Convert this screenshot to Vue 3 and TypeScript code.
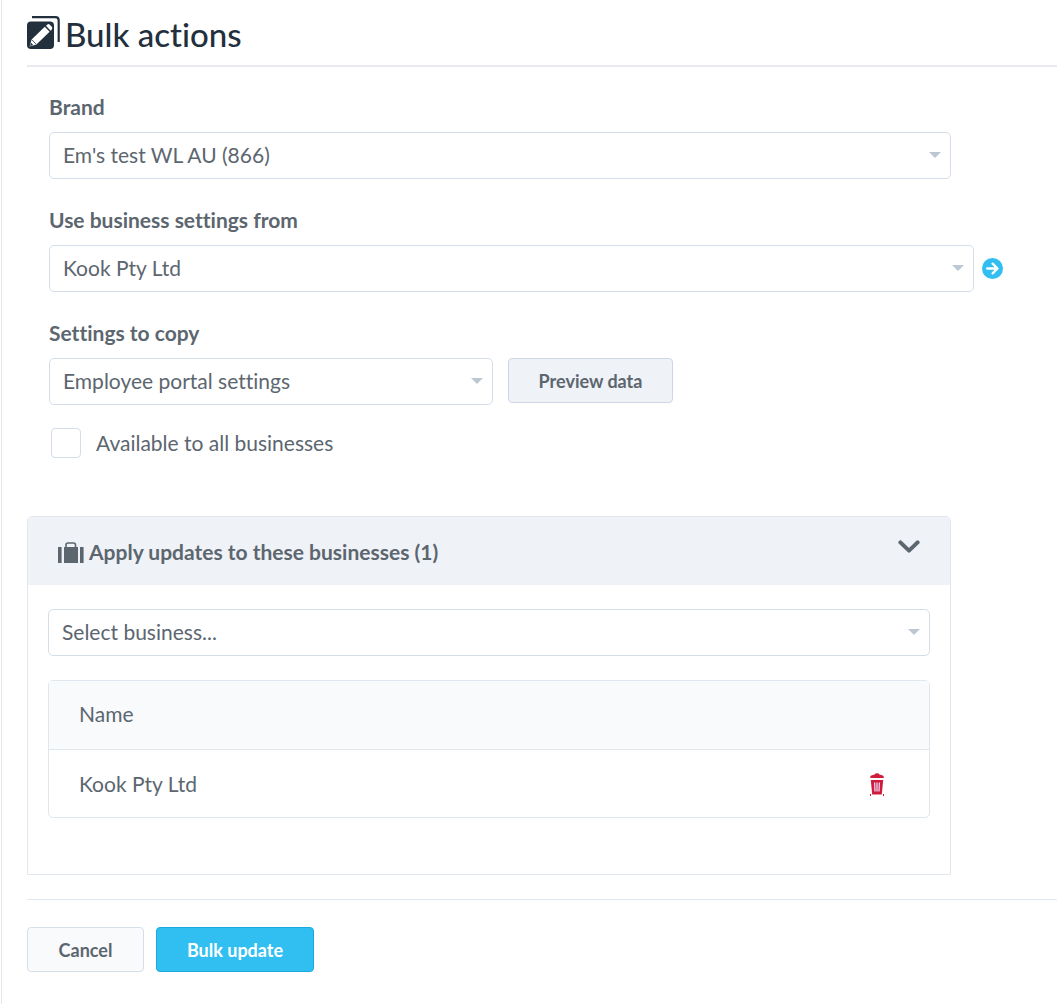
<script setup lang="ts">
import { computed, ref } from 'vue'

interface Business {
  id: number
  name: string
}

const brands = ["Em's test WL AU (866)"]
const businesses: Business[] = [{ id: 1, name: 'Kook Pty Ltd' }]
const settings = ['Employee portal settings']

const brand = ref(brands[0])
const source = ref(businesses[0].id)
const setting = ref(settings[0])
const availableToAll = ref(false)
const expanded = ref(true)
const picked = ref('')
const targets = ref<Business[]>([...businesses])
const count = computed(() => targets.value.length)

function addTarget() {
  const found = businesses.find((b) => String(b.id) === String(picked.value))
  if (found && !targets.value.some((b) => b.id === found.id)) targets.value.push(found)
  picked.value = ''
}

function removeTarget(id: number) {
  targets.value = targets.value.filter((b) => b.id !== id)
}
</script>

<template>
  <main class="page">
    <header class="title">
      <svg class="title-icon" width="34" height="34" viewBox="0 0 34 34" aria-hidden="true">
        <path d="M5 1.2H28.5Q31.7 1.2 31.7 4.4V26" fill="none" stroke="#22303d" stroke-width="2.2" />
        <rect x="0" y="5.5" width="27" height="27.5" rx="4" fill="#22303d" />
        <path d="M2.6 30.5L4.6 23.5L17.8 10.8L22.6 15.8L9.4 28.5ZM19 9.7L20.4 8.4Q21.6 7.6 22.8 8.7L24.8 10.8Q25.8 12.1 24.8 13.4L23.6 14.7Z" fill="#fff" />
        <path d="M3 30L6.2 29.1L4 26.7Z" fill="#22303d" />
        <path d="M4.8 23.7L9.2 28.3" stroke="#22303d" stroke-width="0.8" />
      </svg>
      <h1>Bulk actions</h1>
    </header>

    <form @submit.prevent>
      <div class="fields">
        <div class="field narrow">
          <label for="brand">Brand</label>
          <div class="select">
            <select id="brand" v-model="brand">
              <option v-for="b in brands" :key="b" :value="b">{{ b }}</option>
            </select>
          </div>
        </div>

        <div class="field">
          <label for="source">Use business settings from</label>
          <div class="row">
            <div class="select">
              <select id="source" v-model="source">
                <option v-for="b in businesses" :key="b.id" :value="b.id">{{ b.name }}</option>
              </select>
            </div>
            <a class="go" href="#" aria-label="Go to business">
              <svg width="21" height="21" viewBox="0 0 21 21" aria-hidden="true">
                <circle cx="10.5" cy="10.5" r="10.5" fill="#30bff0" />
                <path d="M5.2 10.5H15M10.6 5.6L15.5 10.5L10.6 15.4" fill="none" stroke="#fff" stroke-width="2.3" stroke-linecap="round" stroke-linejoin="round" />
              </svg>
            </a>
          </div>
        </div>

        <div class="field">
          <label for="setting">Settings to copy</label>
          <div class="row top">
            <div class="select setting">
              <select id="setting" v-model="setting">
                <option v-for="s in settings" :key="s" :value="s">{{ s }}</option>
              </select>
            </div>
            <button type="button" class="btn preview">Preview data</button>
          </div>
        </div>

        <label class="check">
          <input v-model="availableToAll" type="checkbox" />
          <span>Available to all businesses</span>
        </label>
      </div>

      <section class="panel">
        <div class="panel-head">
          <svg class="luggage" width="26" height="22" viewBox="0 0 26 22" aria-hidden="true">
            <path d="M0 5H3.6V21H0ZM22 5H25.6V21H22ZM6 5H20V21H6Z" fill="#5c666f" />
            <path d="M8 5V3Q8 1 10 1H15.5Q17.5 1 17.5 3V5" fill="none" stroke="#5c666f" stroke-width="1.6" />
          </svg>
          <h2>Apply updates to these businesses ({{ count }})</h2>
          <button type="button" class="toggle" aria-label="Toggle businesses" :aria-expanded="expanded" @click="expanded = !expanded">
            <svg width="22" height="14" viewBox="0 0 22 14" aria-hidden="true">
              <path d="M2.4 2.4L11 10.6L19.6 2.4" fill="none" stroke="#5c666f" stroke-width="4" stroke-linecap="round" stroke-linejoin="round" />
            </svg>
          </button>
        </div>
        <div v-if="expanded" class="panel-body">
          <div class="select">
            <select v-model="picked" aria-label="Select business" @change="addTarget">
              <option value="">Select business...</option>
              <option v-for="b in businesses" :key="b.id" :value="b.id">{{ b.name }}</option>
            </select>
          </div>
          <table>
            <thead>
              <tr>
                <th scope="col">Name</th>
                <th class="action"></th>
              </tr>
            </thead>
            <tbody>
              <tr v-for="b in targets" :key="b.id">
                <td>{{ b.name }}</td>
                <td class="action">
                  <button type="button" class="remove" :aria-label="`Remove ${b.name}`" @click="removeTarget(b.id)">
                    <svg width="14" height="23" viewBox="0 0 14 23" aria-hidden="true">
                      <path d="M0.3 5V3.6Q0.5 2.6 2 2.2L4.6 1.6Q5 0.3 7 0.3T9.4 1.6L12 2.2Q13.5 2.6 13.7 3.6V5Z" fill="#cf1c3c" />
                      <path d="M0.8 7H13.2L11.8 21.4H2.2Z" fill="#cf1c3c" />
                      <path d="M4.6 9.5L5 18.5M7 9.5V18.5M9.4 9.5L9 18.5" stroke="#f3d3f2" stroke-width="1.3" />
                      <path d="M0 21H1V23H0ZM13 21H14V23H13Z" fill="#cf1c3c" />
                    </svg>
                  </button>
                </td>
              </tr>
            </tbody>
          </table>
        </div>
      </section>

      <footer class="actions">
        <button type="button" class="btn cancel">Cancel</button>
        <button type="submit" class="btn primary">Bulk update</button>
      </footer>
    </form>
  </main>
</template>

<style>
body {
  background: #fff;
}
</style>

<style scoped>
.page {
  box-sizing: border-box;
  min-height: 100vh;
  margin-left: 1px;
  padding-left: 25px;
  border-left: 1px solid #e3e8ef;
  color: #5c666f;
  font-family: Lato, "Open Sans", sans-serif;
  font-size: 21px;
  font-variant-ligatures: none;
  line-height: 24px;
}

.page *,
.page *::after {
  box-sizing: border-box;
}

.title {
  display: flex;
  align-items: center;
  gap: 4px;
  height: 67px;
  border-bottom: 2px solid #e8eaed;
}

h1 {
  margin: 0;
  padding-top: 2px;
  color: #22303d;
  font-size: 33px;
  font-weight: 500;
  line-height: 40px;
}

.fields {
  padding: 28px 54px 0 22px;
}

.field {
  margin-bottom: 29px;
}

.field > label {
  display: block;
  margin-bottom: 13px;
  font-weight: 700;
}

.narrow {
  margin-right: 52px;
}

.row {
  display: flex;
  align-items: center;
  gap: 8px;
}

.row.top {
  align-items: flex-start;
  gap: 15px;
}

.select {
  position: relative;
  flex: 1;
}

.select.setting {
  flex: 0 1 444px;
}

.select::after {
  content: "";
  position: absolute;
  top: 20px;
  right: 10px;
  border: 6px solid transparent;
  border-top-color: #bcc7d3;
  border-bottom: 0;
  pointer-events: none;
}

select {
  display: block;
  width: 100%;
  height: 47px;
  padding: 0 32px 2px 13px;
  border: 1px solid #d5dde9;
  border-radius: 5px;
  appearance: none;
  background: #fff;
  color: inherit;
  font: inherit;
}

.go,
.go svg,
.panel svg,
.title-icon {
  display: block;
  flex: none;
}

.btn {
  height: 45px;
  padding: 0;
  border: 1px solid #d5dfe8;
  border-radius: 4px;
  background: #f8fafc;
  color: #5c666f;
  font-family: inherit;
  font-size: 18px;
  font-weight: 700;
  white-space: nowrap;
}

.btn.preview {
  width: 165px;
  border-color: #cdd6e8;
  background: #eff2f7;
}

.check {
  display: flex;
  align-items: center;
  gap: 15px;
  width: fit-content;
  margin: -6px 0 0 2px;
}

.check input {
  width: 30px;
  height: 30px;
  margin: 0;
  border: 1px solid #d5dde9;
  border-radius: 4px;
  appearance: none;
  background: #fff;
}

.check input:checked {
  background: #30bff0;
}

.panel {
  margin: 58px 106px 0 0;
  border: 1px solid #e1e7ee;
  border-radius: 5px 5px 0 0;
}

.panel-head {
  display: flex;
  align-items: center;
  gap: 5px;
  height: 68px;
  padding: 0 30px;
  background: #eff2f7;
}

.panel .luggage {
  margin-top: 4px;
}

h2 {
  flex: 1;
  margin: 0;
  padding-top: 2px;
  font-size: 21px;
  font-weight: 700;
  line-height: 24px;
}

.toggle,
.remove {
  padding: 0;
  border: 0;
  background: none;
}

.toggle {
  padding-bottom: 8px;
}

.panel-body {
  padding: 24px 20px 56px;
}

table {
  width: 100%;
  margin-top: 24px;
  border: 1px solid #e1e7ee;
  border-radius: 5px;
  border-spacing: 0;
}

th,
td {
  height: 67px;
  padding: 0 30px;
  font-weight: 400;
  text-align: left;
}

th {
  height: 69px;
  padding-bottom: 2px;
  border-bottom: 1px solid #e1e7ee;
  background: #f8fafc;
}

.action {
  width: 104px;
  padding: 0 45px 0 0;
}

.remove {
  display: block;
  margin-left: auto;
  padding-top: 2px;
}

.actions {
  display: flex;
  gap: 12px;
  margin-top: 24px;
  padding: 27px 0 32px;
  border-top: 1px solid #e1e7ee;
}

.cancel {
  width: 117px;
}

.btn.primary {
  width: 158px;
  border-color: #1aa9e0;
  background: #30bff0;
  color: #fff;
}
</style>
